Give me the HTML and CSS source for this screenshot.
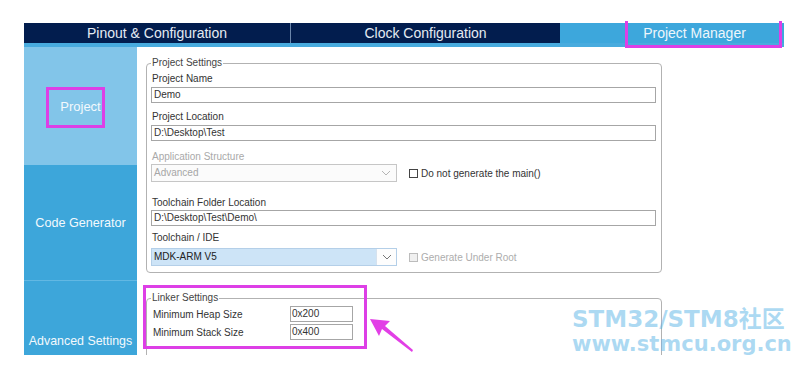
FILE: index.html
```html
<!DOCTYPE html>
<html>
<head>
<meta charset="utf-8">
<link rel="stylesheet" href="styles.css">
</head>
<body>
<div class="page">
  <div class="app">
    <div class="tabs">
      <div class="tab tab-dark tab-first">Pinout &amp; Configuration</div>
      <div class="tab tab-dark">Clock Configuration</div>
      <div class="tab tab-active">Project Manager</div>
    </div>
    <div class="strip"></div>
    <div class="body">
      <nav class="side">
        <div class="side-item side-project">Project</div>
        <div class="side-item side-code">Code Generator</div>
        <div class="side-item side-adv">Advanced Settings</div>
      </nav>
      <main class="main">
        <fieldset class="group group-project">
          <legend>Project Settings</legend>
          <div class="lbl lbl1">Project Name</div>
          <div class="field f-name">Demo</div>
          <div class="lbl lbl2">Project Location</div>
          <div class="field f-loc">D:\Desktop\Test</div>
          <div class="lbl lbl3 disabled">Application Structure</div>
          <div class="row row-app">
            <div class="select select-disabled">
              <span class="select-text">Advanced</span>
              <span class="chev"><svg width="10" height="6" viewBox="0 0 10 6"><path d="M1 1 L5 5 L9 1" fill="none" stroke="#b5b5b5" stroke-width="1"/></svg></span>
            </div>
            <span class="check"></span>
            <span class="check-label">Do not generate the main()</span>
          </div>
          <div class="lbl lbl4">Toolchain Folder Location</div>
          <div class="field f-tool">D:\Desktop\Test\Demo\</div>
          <div class="lbl lbl5">Toolchain / IDE</div>
          <div class="row row-ide">
            <div class="select select-ide">
              <span class="select-text">MDK-ARM V5</span>
              <span class="chev chev-ide"><svg width="10" height="6" viewBox="0 0 10 6"><path d="M1 1 L5 5 L9 1" fill="none" stroke="#777" stroke-width="1"/></svg></span>
            </div>
            <span class="check check-disabled"></span>
            <span class="check-label disabled">Generate Under Root</span>
          </div>
        </fieldset>
        <fieldset class="group group-linker">
          <legend>Linker Settings</legend>
          <div class="linker-grid">
            <div class="lrow">
              <span class="llbl">Minimum Heap Size</span>
              <span class="small-field">0x200</span>
            </div>
            <div class="lrow">
              <span class="llbl">Minimum Stack Size</span>
              <span class="small-field">0x400</span>
            </div>
          </div>
        </fieldset>
      </main>
    </div>
  </div>

  <div class="mark mark-tab"></div>
  <div class="mark mark-project"></div>
  <div class="mark mark-linker"></div>
  <svg class="arrow" width="60" height="50" viewBox="0 0 60 50">
    <polygon points="5,6 25,8 20,13 48,37 47,39 17,16 14,23" fill="#e23fe6"/>
  </svg>
  <div class="watermark">
    <div class="wm1">STM32/STM8社区</div>
    <div class="wm2">www.stmcu.org.cn</div>
  </div>
</div>
</body>
</html>
```

FILE: styles.css
```css
* { box-sizing: border-box; }
html, body { margin: 0; padding: 0; background: #fff; }
body { font-family: "Liberation Sans", Arial, sans-serif; }

.page { position: relative; width: 804px; height: 368px; overflow: hidden; padding: 23px 0 0 24px; }

.app { width: 760px; height: 332px; overflow: hidden; display: flex; flex-direction: column; }

.tabs { display: flex; height: 20px; flex-shrink: 0; background: #021d4e; }
.tab { flex-shrink: 0; width: 269px; height: 20px; line-height: 20px; text-align: center; font-size: 14px; color: #e4ebf3; }
.tab-first { width: 267px; border-right: 1px solid #6b86ab; }
.tab-active { background: #3da7dc; color: #eef6fb; }

.strip { height: 4px; flex-shrink: 0; background: #48abde; }

.body { display: flex; flex: 1; min-height: 0; }

.side { width: 113px; flex-shrink: 0; display: flex; flex-direction: column; }
.side-item { flex-shrink: 0; display: flex; align-items: center; justify-content: center; color: #f3f9fd; font-size: 12.6px; background: #3da6da; }
.side-project { height: 118px; background: #82c5e9; font-size: 13px; }
.side-code { height: 116px; border-bottom: 1px solid #62b8e3; }
.side-adv { height: 120px; font-size: 12.4px; }

.main { flex: 1; background: #fff; padding: 10px 0 0 9px; font-size: 10px; color: #333; }

.group { width: 516px; margin: 0; border: 1px solid #b2b2b2; border-radius: 4px; padding: 0 5px 6px 4px; }
.group legend { padding: 0 1px; font-size: 10px; line-height: 12px; color: #444; }

.lbl { height: 12px; line-height: 12px; color: #333; padding-left: 1px; }
.disabled { color: #a9a9a9; }
.lbl1 { margin-top: 4px; }
.lbl2 { margin-top: 8px; }
.lbl3 { margin-top: 10px; }
.lbl4 { margin-top: 15px; }
.lbl5 { margin-top: 6px; }

.field { height: 16px; border: 1px solid #a6a6a6; line-height: 14px; padding-left: 2px; color: #333; margin-top: 2px; }
.f-tool { margin-top: 1px; }

.row { display: flex; align-items: center; }
.row-app { margin-top: 1px; }
.row-ide { margin-top: 4px; }

.select { width: 246px; height: 18px; display: flex; align-items: stretch; border: 1px solid #c6c6c6; }
.select-text { flex: 1; padding-left: 2px; line-height: 16px; }
.select-disabled { background: #fbfbfb; color: #a6a6a6; }
.chev { width: 20px; display: flex; align-items: center; justify-content: center; }
.select-ide { background: #cde4f7; border-color: #b4cfe8; color: #222; }
.chev-ide { background: #fdfdfd; border-left: 1px solid #d6e2ee; }

.check { width: 9px; height: 9px; border: 1px solid #444; margin-left: 12px; margin-right: 3px; background: #fff; }
.check-disabled { border-color: #bcbcbc; background: #f0f0f0; }
.check-label { font-size: 10px; color: #333; }
.check-label.disabled { color: #adadad; }

.group-linker { margin-top: 19px; padding: 0 5px 40px 6px; }
.group-linker legend { margin-left: -2px; }
.linker-grid { display: flex; flex-direction: column; gap: 2px; margin-top: 2px; }
.lrow { display: flex; align-items: center; height: 16px; }
.llbl { width: 137px; color: #333; }
.small-field { width: 63px; height: 16px; border: 1px solid #a6a6a6; line-height: 14px; padding-left: 1px; color: #333; }

.mark { position: absolute; border: 3px solid #dd3fe6; }
.mark-tab { left: 625px; top: 21px; width: 157px; height: 27px; border-top: none; }
.mark-project { left: 46px; top: 87px; width: 59px; height: 41px; }
.mark-linker { left: 143px; top: 285px; width: 224px; height: 64px; }

.arrow { position: absolute; left: 365px; top: 313px; }

.watermark { position: absolute; left: 572px; top: 306px; font-family: "DejaVu Sans", "Noto Sans CJK SC", sans-serif; font-weight: bold; color: rgba(90, 180, 230, 0.5); }
.wm1 { font-size: 23px; line-height: 26px; }
.wm2 { font-size: 21px; line-height: 24px; }
```
